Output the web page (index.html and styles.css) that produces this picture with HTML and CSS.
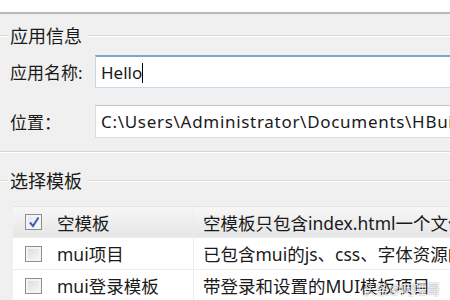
FILE: index.html
```html
<!DOCTYPE html>
<html lang="zh-CN">
<head>
    <meta charset="UTF-8">
    <title>新建项目</title>
    <link rel="stylesheet" href="styles.css">
</head>
<body>
    <div class="topbar"></div>

    <div class="group-title">
        <span class="line-short"></span>
        <span class="title">应用信息</span>
        <span class="line"></span>
    </div>

    <div class="field">
        <label class="field-label">应用名称:</label>
        <div class="input focused">Hello<span class="caret"></span></div>
    </div>
    <div class="field">
        <label class="field-label">位置：</label>
        <div class="input path">C:\Users\Administrator\Documents\HBuilderProjects</div>
    </div>

    <div class="separator"></div>

    <div class="group-title second">
        <span class="line-short"></span>
        <span class="title">选择模板</span>
        <span class="line"></span>
    </div>

    <div class="table">
        <div class="row selected">
            <div class="cell name"><span class="check checked">
                <svg width="12" height="12" viewBox="0 0 12 12"><path d="M2 6.5 L5 10 L10.5 1.5" fill="none" stroke="#3c5fb8" stroke-width="2"/></svg>
            </span>空模板</div>
            <div class="cell desc">空模板只包含index.html一个文件</div>
        </div>
        <div class="row">
            <div class="cell name"><span class="check"></span>mui项目</div>
            <div class="cell desc">已包含mui的js、css、字体资源的项目</div>
        </div>
        <div class="row">
            <div class="cell name"><span class="check"></span>mui登录模板</div>
            <div class="cell desc">带登录和设置的MUI模板项目</div>
        </div>
    </div>

    <div class="watermark">头条@阿哩哥</div>
</body>
</html>
```

FILE: styles.css
```css
body {
    margin: 0;
    width: 450px;
    height: 300px;
    overflow: hidden;
    background: #f0f0f0;
    color: #1a1a1a;
    font-family: "Noto Sans", "Noto Sans CJK SC", sans-serif;
    font-size: 16px;
    position: relative;
}
.topbar {
    height: 12px;
    background: #fff;
    border-bottom: 2px solid #b9b9b9;
}
.group-title {
    display: flex;
    align-items: center;
    gap: 2px;
    height: 20px;
    margin-top: 12px;
}
.group-title .title {
    font-size: 18px;
    line-height: 20px;
}
.line-short {
    width: 8px;
    height: 0;
    border-top: 1px solid #d8d8d8;
    border-bottom: 1px solid #fff;
}
.line {
    flex: 1;
    height: 0;
    border-top: 1px solid #d8d8d8;
    border-bottom: 1px solid #fff;
    margin-left: 4px;
}
.field {
    display: flex;
    align-items: center;
    margin-top: 9px;
}
.field + .field {
    margin-top: 17px;
}
.field-label {
    width: 95px;
    flex-shrink: 0;
    padding-left: 10px;
    box-sizing: border-box;
    font-size: 17px;
}
.input {
    flex: 1;
    min-width: 0;
    height: 33px;
    box-sizing: border-box;
    background: #fff;
    border: 1px solid #dcdcdc;
    border-top-color: #c4c4c4;
    border-right: none;
    padding-left: 5px;
    font-size: 17px;
    line-height: 31px;
    white-space: nowrap;
    overflow: hidden;
}
.input.focused {
    border-color: #c5dbec;
    border-top: 2px solid #7ea6d2;
}
.input.path {
    letter-spacing: 0.7px;
}
.caret {
    display: inline-block;
    width: 1px;
    height: 20px;
    background: #000;
    vertical-align: -4px;
}
.separator {
    margin-top: 13px;
    border-top: 1px solid #d5d5d5;
    border-bottom: 1px solid #fff;
}
.group-title.second {
    margin-top: 18px;
}
.table {
    margin: 15px 0 0 13px;
    background: #fff;
    border-top: 1px solid #e4e4e4;
    overflow: hidden;
}
.row {
    display: flex;
    height: 31px;
    border-bottom: 1px solid #ececec;
    overflow: hidden;
}
.row.selected {
    height: 30px;
    background: linear-gradient(#f7f7f7, #e6e6e6);
}
.cell {
    display: flex;
    align-items: center;
    font-size: 17.5px;
    white-space: nowrap;
}
.cell.name {
    width: 180px;
    flex-shrink: 0;
    border-right: 1px solid #ececec;
}
.cell.desc {
    padding-left: 9px;
}
.check {
    width: 15px;
    height: 14px;
    margin: 0 15px 0 12px;
    border: 1px solid #8e8f8f;
    background: linear-gradient(135deg, #dcdcdc, #f8f8f8);
    box-shadow: inset 0 0 0 2px #f4f4f4;
    display: flex;
    align-items: center;
    justify-content: center;
}
.check.checked {
    background: linear-gradient(135deg, #e2e6ee, #fafbfd);
}
.watermark {
    position: absolute;
    right: 10px;
    bottom: 2px;
    font-size: 13px;
    color: rgba(255, 255, 255, 0.85);
    text-shadow: 0 0 2px rgba(0, 0, 0, 0.5);
}
```
